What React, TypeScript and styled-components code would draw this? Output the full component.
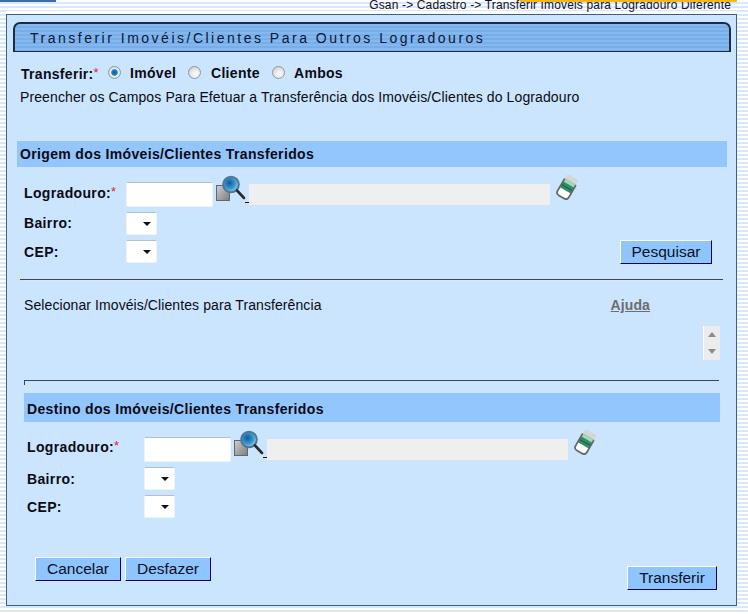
import React from "react";
import styled, { createGlobalStyle } from "styled-components";

const Global = createGlobalStyle`
  html, body { margin: 0; padding: 0; background: #fff; }
  body { font-family: "Liberation Sans", Arial, sans-serif; color: #000; }
`;

const Page = styled.div`
  position: relative;
  width: 748px;
  height: 614px;
  overflow: hidden;
  box-sizing: border-box;
  padding: 14px 0 0 6px;
  background: repeating-linear-gradient(180deg, #fff 0, #fff 2px, #d5e9fb 2px, #d5e9fb 4px);
`;

const TopBlue = styled.div`
  position: absolute;
  left: 0;
  top: 0;
  width: 56px;
  height: 2px;
  background: #3c6cab;
`;

const TopGold = styled.div`
  position: absolute;
  left: 520px;
  top: 0;
  width: 217px;
  height: 2px;
  background: #f4b81c;
`;

const Breadcrumb = styled.div`
  position: absolute;
  right: 17px;
  top: 0;
  font-size: 12px;
  line-height: 11px;
  letter-spacing: 0.15px;
  white-space: nowrap;
  color: #10101e;
`;

const Panel = styled.main`
  box-sizing: border-box;
  width: 731px;
  height: 592px;
  display: flex;
  flex-direction: column;
  border: 1px solid #3f5f7f;
  background: #cbe5fe;
  box-shadow: 0 -3px 0 #fff;
`;

const TitleBar = styled.h1`
  box-sizing: border-box;
  margin: 7px 0 0 6px;
  width: 718px;
  height: 30px;
  padding: 0 0 0 15px;
  display: flex;
  align-items: center;
  border: 2px solid #1c2c44;
  border-bottom-width: 1px;
  border-radius: 7px 7px 0 0;
  background: repeating-linear-gradient(180deg, #84b8ef 0, #84b8ef 2px, #78aee8 2px, #78aee8 4px);
  font-size: 14px;
  font-weight: 400;
  letter-spacing: 2.5px;
  color: #0a1636;
  white-space: nowrap;
`;

const ChoiceRow = styled.div`
  display: flex;
  align-items: center;
  height: 18px;
  margin: 12px 0 0 14px;
`;

const BoldText = styled.span`
  font-size: 14px;
  font-weight: 700;
  letter-spacing: 0.3px;
  white-space: nowrap;
  color: #0a0a14;
`;

const Star = styled.span`
  color: #f01c28;
  font-size: 13px;
  font-weight: 400;
  vertical-align: 2px;
`;

const TransferLabel = styled(BoldText)`
  width: 87px;
`;

const Choice = styled.label<{ $width: number }>`
  display: flex;
  align-items: center;
  width: ${(p) => p.$width}px;
`;

const Radio = styled.input.attrs({ type: "radio" })<{ $gap: number }>`
  appearance: none;
  box-sizing: border-box;
  width: 13px;
  height: 13px;
  margin: -2px ${(p) => p.$gap}px 0 0;
  border-radius: 50%;
  border: 1px solid #8f98a1;
  background: radial-gradient(circle at 60% 65%, #fff 0, #e8e8e8 45%, #bfc3c7 100%);
  &:checked {
    background: radial-gradient(circle, #0a5f9c 0, #1a86c4 36%, #e8eef2 48%, #c6ccd2 100%);
  }
`;

const Instruction = styled.p`
  margin: 6px 0 0 13px;
  font-size: 14px;
  line-height: 18px;
  letter-spacing: 0.11px;
  color: #0a0a14;
  white-space: nowrap;
`;

const Block = styled.section<{ $left: number; $top: number; $width: number }>`
  display: flex;
  flex-direction: column;
  width: ${(p) => p.$width}px;
  margin: ${(p) => p.$top}px 0 0 ${(p) => p.$left}px;
`;

const SectionBar = styled.h2<{ $height: number; $indent: number; $top: number; $lift: number }>`
  box-sizing: border-box;
  display: flex;
  align-items: center;
  height: ${(p) => p.$height}px;
  margin: ${(p) => p.$top}px 0 0;
  padding: ${(p) => p.$lift}px 0 0 ${(p) => p.$indent}px;
  background: #93c6fd;
  font-size: 14px;
  font-weight: 700;
  letter-spacing: 0.35px;
  color: #0a0a14;
  white-space: nowrap;
`;

const FieldRow = styled.div<{ $top: number; $height: number; $indent: number; $label: number }>`
  display: grid;
  grid-template-columns: ${(p) => p.$label}px auto 1fr;
  align-items: start;
  height: ${(p) => p.$height}px;
  margin-top: ${(p) => p.$top}px;
  padding: 0 15px 0 ${(p) => p.$indent}px;
`;

const FieldLabel = styled(BoldText)<{ $drop: number }>`
  line-height: 17px;
  letter-spacing: 0.35px;
  margin-top: ${(p) => p.$drop}px;
`;

const TextBox = styled.input`
  box-sizing: border-box;
  display: block;
  width: 87px;
  height: 25px;
  padding: 1px 3px;
  border: 1px solid #edf3f9;
  border-top-color: #b3bfcb;
  border-radius: 2px;
  background: #fff;
  outline: none;
`;

const Lookup = styled.div`
  display: flex;
  align-items: flex-start;
  margin-top: -7px;
`;

const LookupLink = styled.a`
  display: flex;
  align-items: flex-start;
  margin-left: 3px;
`;

const LinkMark = styled.span`
  width: 4px;
  height: 1px;
  margin: 27px 0 0 -1px;
  background: #111;
`;

const ReadOnlyBox = styled.div`
  width: 301px;
  height: 21px;
  margin: 9px 0 0 0;
  background: #efefef;
`;

const EraserWrap = styled.a`
  display: block;
  margin-left: 6px;
  line-height: 0;
`;

const SelectWrap = styled.div`
  position: relative;
  width: 31px;
  height: 23px;
  box-sizing: border-box;
  border: 1px solid #edf3f9;
  border-top-color: #b3bfcb;
  border-radius: 2px;
  background: #fff;
  &::after {
    content: "";
    position: absolute;
    right: 5px;
    top: 9px;
    border-left: 4px solid transparent;
    border-right: 4px solid transparent;
    border-top: 4px solid #111;
    pointer-events: none;
  }
`;

const NativeSelect = styled.select`
  appearance: none;
  display: block;
  width: 100%;
  height: 100%;
  border: 0;
  background: transparent;
  outline: none;
`;

const ActionButton = styled.button<{ $width: number }>`
  box-sizing: border-box;
  width: ${(p) => p.$width}px;
  height: 24px;
  padding: 0;
  border: 1px solid;
  border-color: #fff #00005c #00005c #fff;
  border-radius: 0;
  background: #8fc5fd;
  font-family: inherit;
  font-size: 15.5px;
  line-height: 20px;
  color: #0a0f24;
`;

const SearchButton = styled(ActionButton)`
  justify-self: end;
`;

const Rule = styled.hr<{ $tick?: boolean; $left: number; $right: number; $top: number }>`
  box-sizing: border-box;
  height: ${(p) => (p.$tick ? 5 : 2)}px;
  margin: ${(p) => p.$top}px ${(p) => p.$right}px 0 ${(p) => p.$left}px;
  border: 0;
  border-top: 1px solid #3d4650;
  border-bottom: ${(p) => (p.$tick ? 0 : "1px solid #dbe6f0")};
  border-left: ${(p) => (p.$tick ? "1px solid #3d4650" : 0)};
`;

const SelectionRow = styled.div`
  display: flex;
  justify-content: space-between;
  align-items: center;
  height: 18px;
  margin-top: 15px;
  padding: 0 77px 0 7px;
  font-size: 14px;
  letter-spacing: 0.09px;
  color: #0a0a14;
`;

const HelpLink = styled.a`
  font-size: 14px;
  font-weight: 700;
  letter-spacing: 0.1px;
  color: #6d6d6d;
  text-decoration: underline;
`;

const Scroller = styled.div`
  box-sizing: border-box;
  align-self: flex-end;
  display: flex;
  flex-direction: column;
  justify-content: space-between;
  align-items: center;
  width: 17px;
  height: 34px;
  margin: 12px 7px 0 0;
  padding: 6px 0;
  border-left: 1px solid #fff;
  background: #ececec;
`;

const ArrowUp = styled.span`
  border-left: 4px solid transparent;
  border-right: 4px solid transparent;
  border-bottom: 5px solid #8c8c8c;
`;

const ArrowDown = styled.span`
  border-left: 4px solid transparent;
  border-right: 4px solid transparent;
  border-top: 5px solid #8c8c8c;
`;

const Footer = styled.div`
  display: flex;
  align-items: flex-start;
  gap: 4px;
  margin-top: 39px;
  padding: 0 19px 0 28px;
`;

const PushedRight = styled(ActionButton)`
  margin: 9px 0 0 auto;
`;

const Magnifier = () => (
  <svg width="30" height="30" viewBox="0 0 30 30" aria-hidden="true">
    <defs>
      <linearGradient id="mgDoc" x1="0" y1="0" x2="1" y2="1">
        <stop offset="0" stopColor="#d0d0d0" />
        <stop offset="1" stopColor="#7c7c7c" />
      </linearGradient>
      <radialGradient id="mgLens" cx="0.4" cy="0.4" r="0.7">
        <stop offset="0" stopColor="#0d5a9c" />
        <stop offset="0.55" stopColor="#3c9ad2" />
        <stop offset="1" stopColor="#bfe6f6" />
      </radialGradient>
    </defs>
    <rect x="0.5" y="10.5" width="13" height="15" fill="url(#mgDoc)" stroke="#666" />
    <circle cx="15" cy="9.5" r="7.8" fill="url(#mgLens)" stroke="#4f7693" strokeWidth="2" />
    <path d="M21 15.5 L28 23" stroke="#2a2a2a" strokeWidth="2.6" strokeLinecap="round" />
  </svg>
);

const Eraser = () => (
  <svg width="22" height="25" viewBox="0 0 22 25" aria-hidden="true">
    <g transform="rotate(30 11 12.5)">
      <rect x="4.5" y="0.5" width="13" height="6" rx="1.5" fill="#d4d6d6" />
      <rect x="4.5" y="6" width="13" height="10" fill="#2f8f68" />
      <rect x="4.5" y="6" width="13" height="3" fill="#a6d8bf" />
      <rect x="4.5" y="12" width="13" height="1" fill="#1f5f46" />
      <path d="M4.5 16 H17.5 V20 Q17.5 23.5 14 23.5 H8 Q4.5 23.5 4.5 20 Z" fill="#fff" />
      <path d="M4.5 6 V20 Q4.5 23.5 8 23.5 H14 Q17.5 23.5 17.5 20 V6" fill="none" stroke="#666" strokeWidth="1.7" />
    </g>
  </svg>
);

const Required = () => <Star>*</Star>;

const SelectBox = () => (
  <SelectWrap>
    <NativeSelect aria-label="opções" />
  </SelectWrap>
);

const LogradouroRow = ({ indent, label, top, drop }: { indent: number; label: number; top: number; drop: number }) => (
  <FieldRow $top={top} $height={25} $indent={indent} $label={label}>
    <FieldLabel $drop={drop}>
      Logradouro:<Required />
    </FieldLabel>
    <TextBox />
    <Lookup>
      <LookupLink>
        <Magnifier />
        <LinkMark />
      </LookupLink>
      <ReadOnlyBox />
      <EraserWrap>
        <Eraser />
      </EraserWrap>
    </Lookup>
  </FieldRow>
);

export default function App() {
  return (
    <Page>
      <Global />
      <Breadcrumb>Gsan -&gt; Cadastro -&gt; Transferir Imoveis para Logradouro Diferente</Breadcrumb>
      <TopBlue />
      <TopGold />
      <Panel>
        <TitleBar>Transferir Imovéis/Clientes Para Outros Logradouros</TitleBar>
        <ChoiceRow>
          <TransferLabel>
            Transferir:<Required />
          </TransferLabel>
          <Choice $width={80}>
            <Radio name="t" $gap={9} defaultChecked />
            <BoldText>Imóvel</BoldText>
          </Choice>
          <Choice $width={84}>
            <Radio name="t" $gap={10} />
            <BoldText>Cliente</BoldText>
          </Choice>
          <Choice $width={80}>
            <Radio name="t" $gap={9} />
            <BoldText>Ambos</BoldText>
          </Choice>
        </ChoiceRow>
        <Instruction>Preencher os Campos Para Efetuar a Transferência dos Imovéis/Clientes do Logradouro</Instruction>

        <Block $left={10} $top={35} $width={710}>
          <SectionBar $height={26} $indent={3} $top={0} $lift={0}>
            Origem dos Imóveis/Clientes Transferidos
          </SectionBar>
          <LogradouroRow indent={7} label={102} top={15} drop={1} />
          <FieldRow $top={5} $height={23} $indent={7} $label={102}>
            <FieldLabel $drop={3}>Bairro:</FieldLabel>
            <SelectBox />
          </FieldRow>
          <FieldRow $top={5} $height={24} $indent={7} $label={102}>
            <FieldLabel $drop={4}>CEP:</FieldLabel>
            <SelectBox />
            <SearchButton $width={92}>Pesquisar</SearchButton>
          </FieldRow>
          <Rule $left={3} $right={4} $top={15} />
          <SelectionRow>
            <span>Selecionar Imovéis/Clientes para Transferência</span>
            <HelpLink>Ajuda</HelpLink>
          </SelectionRow>
          <Scroller>
            <ArrowUp />
            <ArrowDown />
          </Scroller>
        </Block>

        <Block $left={17} $top={20} $width={696}>
          <Rule $tick $left={0} $right={1} $top={0} />
          <SectionBar $height={29} $indent={3} $top={8} $lift={2}>
            Destino dos Imóveis/Clientes Transferidos
          </SectionBar>
          <LogradouroRow indent={3} label={117} top={15} drop={0} />
          <FieldRow $top={5} $height={23} $indent={3} $label={117}>
            <FieldLabel $drop={4}>Bairro:</FieldLabel>
            <SelectBox />
          </FieldRow>
          <FieldRow $top={5} $height={23} $indent={3} $label={117}>
            <FieldLabel $drop={4}>CEP:</FieldLabel>
            <SelectBox />
          </FieldRow>
        </Block>

        <Footer>
          <ActionButton $width={86}>Cancelar</ActionButton>
          <ActionButton $width={86}>Desfazer</ActionButton>
          <PushedRight $width={90}>Transferir</PushedRight>
        </Footer>
      </Panel>
    </Page>
  );
}
